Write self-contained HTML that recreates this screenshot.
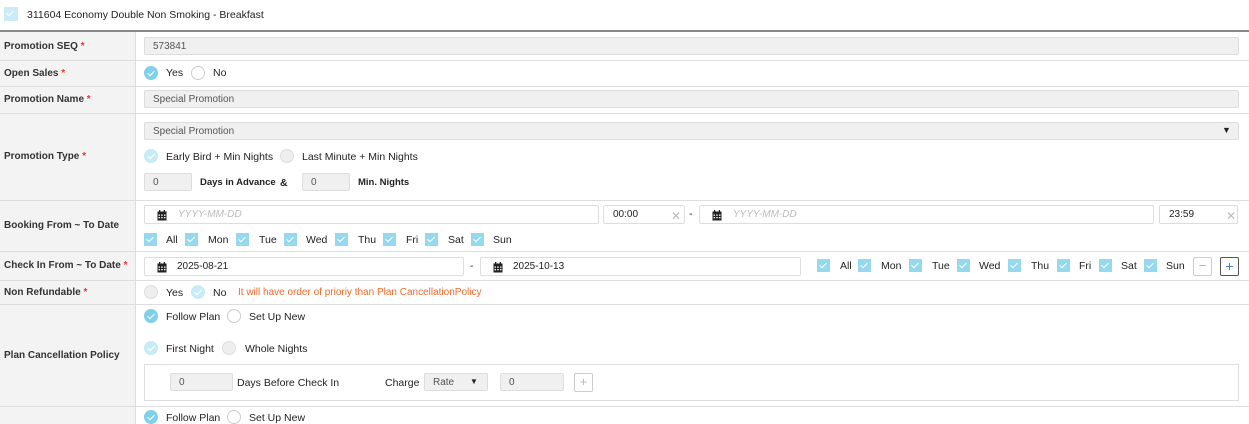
<!DOCTYPE html><html><head><style>
*{box-sizing:border-box;margin:0;padding:0}
body{width:1249px;height:424px;overflow:hidden;background:#fff;font-family:"Liberation Sans",sans-serif;font-size:10.5px;color:#222;position:relative}
.a{position:absolute}
.lab{position:absolute;left:0;width:136px;background:#f3f3f3;border-right:1px solid #ddd;font-weight:bold;font-size:10px;color:#333;padding-left:4px;display:flex;align-items:center}
.hl{position:absolute;left:0;width:1249px;height:1px;background:#ddd}
.r{color:#e33}
.in{position:absolute;background:#f0f0f0;border:1px solid #ddd;border-radius:2px;height:18px;padding-left:8px;color:#555;font-size:10px;display:flex;align-items:center}
.wi{position:absolute;background:#fff;border:1px solid #ddd;border-radius:2px;height:19px;font-size:10px;color:#222}
.wi span{top:3px!important}
.cb{position:absolute;width:13px;height:13px;background:#96d9ef}
.cb:after,.rd.on:after,.hc:after{content:"";position:absolute;left:4px;top:2px;width:3px;height:6px;border:solid #fff;border-width:0 1.5px 1.5px 0;transform:rotate(45deg)}
.rd{position:absolute;width:14px;height:14px;border-radius:50%;border:1px solid #ccc;background:#fff}
.rd.on{background:#7fd0ea;border-color:#7fd0ea}
.rd.lt{background:#c8ecf7;border-color:#c8ecf7}
.rd.g{background:#eee;border-color:#ddd}
.t{position:absolute;font-size:10.5px;white-space:nowrap}
.ph{color:#bbb;font-style:italic}
.x{position:absolute;color:#bbb;font-size:12px}
</style></head><body>
<svg width="0" height="0" style="position:absolute"><defs><symbol id="cal" viewBox="0 0 10 11"><rect x="0.5" y="1.5" width="9" height="9" fill="#222"/><rect x="2" y="0" width="1.3" height="3" fill="#222"/><rect x="6.7" y="0" width="1.3" height="3" fill="#222"/><g fill="#fff"><rect x="1.5" y="4.5" width="1.5" height="1.3"/><rect x="4.2" y="4.5" width="1.5" height="1.3"/><rect x="7" y="4.5" width="1.5" height="1.3"/><rect x="1.5" y="7" width="1.5" height="1.3"/><rect x="4.2" y="7" width="1.5" height="1.3"/><rect x="7" y="7" width="1.5" height="1.3"/></g></symbol></defs></svg>

<div class="a hc" style="left:4px;top:7px;width:14px;height:14px;background:#c9ecf8"></div>
<div class="t" style="left:27px;top:9px;font-size:10.5px">311604 Economy Double Non Smoking - Breakfast</div>
<div class="a" style="left:0;top:30px;width:1249px;height:2px;background:#888"></div>

<div class="lab" style="top:32px;height:28px">Promotion SEQ&nbsp;<span class="r">*</span></div>
<div class="lab" style="top:60px;height:26px">Open Sales&nbsp;<span class="r">*</span></div>
<div class="lab" style="top:86px;height:27px">Promotion Name&nbsp;<span class="r">*</span></div>
<div class="lab" style="top:113px;height:87px">Promotion Type&nbsp;<span class="r">*</span></div>
<div class="lab" style="top:200px;height:51px">Booking From ~ To Date</div>
<div class="lab" style="top:251px;height:29px">Check In From ~ To Date&nbsp;<span class="r">*</span></div>
<div class="lab" style="top:280px;height:24px">Non Refundable&nbsp;<span class="r">*</span></div>
<div class="lab" style="top:304px;height:102px">Plan Cancellation Policy</div>
<div class="lab" style="top:406px;height:18px"></div>
<div class="hl" style="top:60px"></div><div class="hl" style="top:86px"></div><div class="hl" style="top:113px"></div><div class="hl" style="top:200px"></div><div class="hl" style="top:251px"></div><div class="hl" style="top:280px"></div><div class="hl" style="top:304px"></div><div class="hl" style="top:406px"></div>

<div class="in" style="left:144px;top:37px;width:1095px">573841</div>
<div class="rd on" style="left:144px;top:66px"></div><div class="t" style="left:166px;top:67px">Yes</div>
<div class="rd" style="left:191px;top:66px"></div><div class="t" style="left:213px;top:67px">No</div>
<div class="in" style="left:144px;top:90px;width:1095px">Special Promotion</div>
<div class="in" style="left:144px;top:122px;width:1095px">Special Promotion</div>
<div class="t" style="left:1222px;top:125px;font-size:9px">▼</div>
<div class="rd on lt" style="left:144px;top:149px"></div><div class="t" style="left:166px;top:151px">Early Bird + Min Nights</div>
<div class="rd g" style="left:280px;top:149px"></div><div class="t" style="left:302px;top:151px">Last Minute + Min Nights</div>
<div class="in" style="left:144px;top:173px;width:48px">0</div><div class="t" style="left:200px;top:177px;font-weight:bold;font-size:9.5px">Days in Advance</div>
<div class="t" style="left:280px;top:177px;font-weight:bold">&amp;</div>
<div class="in" style="left:302px;top:173px;width:48px">0</div><div class="t" style="left:358px;top:177px;font-weight:bold;font-size:9.5px">Min. Nights</div>

<div class="wi" style="left:144px;top:205px;width:455px"><svg class="a" style="left:12px;top:4px" width="10" height="11"><use href="#cal"/></svg><span class="a ph" style="left:33px">YYYY-MM-DD</span></div>
<div class="wi" style="left:603px;top:205px;width:82px"><span class="a" style="left:9px">00:00</span><span class="x" style="left:67px">✕</span></div>
<div class="t" style="left:689px;top:208px">-</div>
<div class="wi" style="left:699px;top:205px;width:455px"><svg class="a" style="left:12px;top:4px" width="10" height="11"><use href="#cal"/></svg><span class="a ph" style="left:33px">YYYY-MM-DD</span></div>
<div class="wi" style="left:1159px;top:205px;width:79px"><span class="a" style="left:9px">23:59</span><span class="x" style="left:66px">✕</span></div>
<div class="cb" style="left:144px;top:233px"></div><div class="t" style="left:166px;top:234px">All</div>
<div class="cb" style="left:185px;top:233px"></div><div class="t" style="left:208px;top:234px">Mon</div>
<div class="cb" style="left:236px;top:233px"></div><div class="t" style="left:259px;top:234px">Tue</div>
<div class="cb" style="left:284px;top:233px"></div><div class="t" style="left:306px;top:234px">Wed</div>
<div class="cb" style="left:335px;top:233px"></div><div class="t" style="left:358px;top:234px">Thu</div>
<div class="cb" style="left:383px;top:233px"></div><div class="t" style="left:406px;top:234px">Fri</div>
<div class="cb" style="left:425px;top:233px"></div><div class="t" style="left:448px;top:234px">Sat</div>
<div class="cb" style="left:471px;top:233px"></div><div class="t" style="left:493px;top:234px">Sun</div>

<div class="wi" style="left:144px;top:257px;width:320px"><svg class="a" style="left:12px;top:4px" width="10" height="11"><use href="#cal"/></svg><span class="a" style="left:32px">2025-08-21</span></div>
<div class="t" style="left:470px;top:260px">-</div>
<div class="wi" style="left:480px;top:257px;width:321px"><svg class="a" style="left:12px;top:4px" width="10" height="11"><use href="#cal"/></svg><span class="a" style="left:32px">2025-10-13</span></div>
<div class="cb" style="left:817px;top:259px"></div><div class="t" style="left:840px;top:260px">All</div>
<div class="cb" style="left:858px;top:259px"></div><div class="t" style="left:881px;top:260px">Mon</div>
<div class="cb" style="left:909px;top:259px"></div><div class="t" style="left:932px;top:260px">Tue</div>
<div class="cb" style="left:957px;top:259px"></div><div class="t" style="left:979px;top:260px">Wed</div>
<div class="cb" style="left:1008px;top:259px"></div><div class="t" style="left:1031px;top:260px">Thu</div>
<div class="cb" style="left:1057px;top:259px"></div><div class="t" style="left:1079px;top:260px">Fri</div>
<div class="cb" style="left:1099px;top:259px"></div><div class="t" style="left:1121px;top:260px">Sat</div>
<div class="cb" style="left:1144px;top:259px"></div><div class="t" style="left:1166px;top:260px">Sun</div>
<div class="a" style="left:1193px;top:257px;width:19px;height:19px;border:1px solid #ccc;border-radius:2px;color:#aaa;text-align:center;line-height:16px;font-size:13px">−</div>
<div class="a" style="left:1220px;top:257px;width:19px;height:19px;border:1px solid #555;border-radius:2px;color:#4a7fc0;text-align:center;line-height:16px;font-size:14px">+</div>

<div class="rd g" style="left:144px;top:285px"></div><div class="t" style="left:166px;top:287px">Yes</div>
<div class="rd on lt" style="left:191px;top:285px"></div><div class="t" style="left:213px;top:287px">No</div>
<div class="t" style="left:238px;top:287px;color:#f06a2a;font-size:10px">It will have order of prioriy than Plan CancellationPolicy</div>

<div class="rd on" style="left:144px;top:309px"></div><div class="t" style="left:166px;top:311px">Follow Plan</div>
<div class="rd" style="left:227px;top:309px"></div><div class="t" style="left:249px;top:311px">Set Up New</div>
<div class="rd on lt" style="left:144px;top:341px"></div><div class="t" style="left:166px;top:343px">First Night</div>
<div class="rd g" style="left:222px;top:341px"></div><div class="t" style="left:245px;top:343px">Whole Nights</div>
<div class="a" style="left:144px;top:364px;width:1095px;height:37px;border:1px solid #ddd"></div>
<div class="in" style="left:170px;top:373px;width:63px">0</div><div class="t" style="left:237px;top:377px">Days Before Check In</div>
<div class="t" style="left:385px;top:377px">Charge</div>
<div class="in" style="left:424px;top:373px;width:64px">Rate<span class="a" style="left:45px;top:3px;color:#222;font-size:8px">▼</span></div>
<div class="in" style="left:500px;top:373px;width:64px">0</div>
<div class="a" style="left:574px;top:373px;width:19px;height:19px;border:1px solid #ccc;border-radius:2px;color:#bbb;text-align:center;line-height:16px;font-size:13px">+</div>

<div class="rd on" style="left:144px;top:410px"></div><div class="t" style="left:166px;top:412px">Follow Plan</div>
<div class="rd" style="left:227px;top:410px"></div><div class="t" style="left:249px;top:412px">Set Up New</div>
</body></html>
